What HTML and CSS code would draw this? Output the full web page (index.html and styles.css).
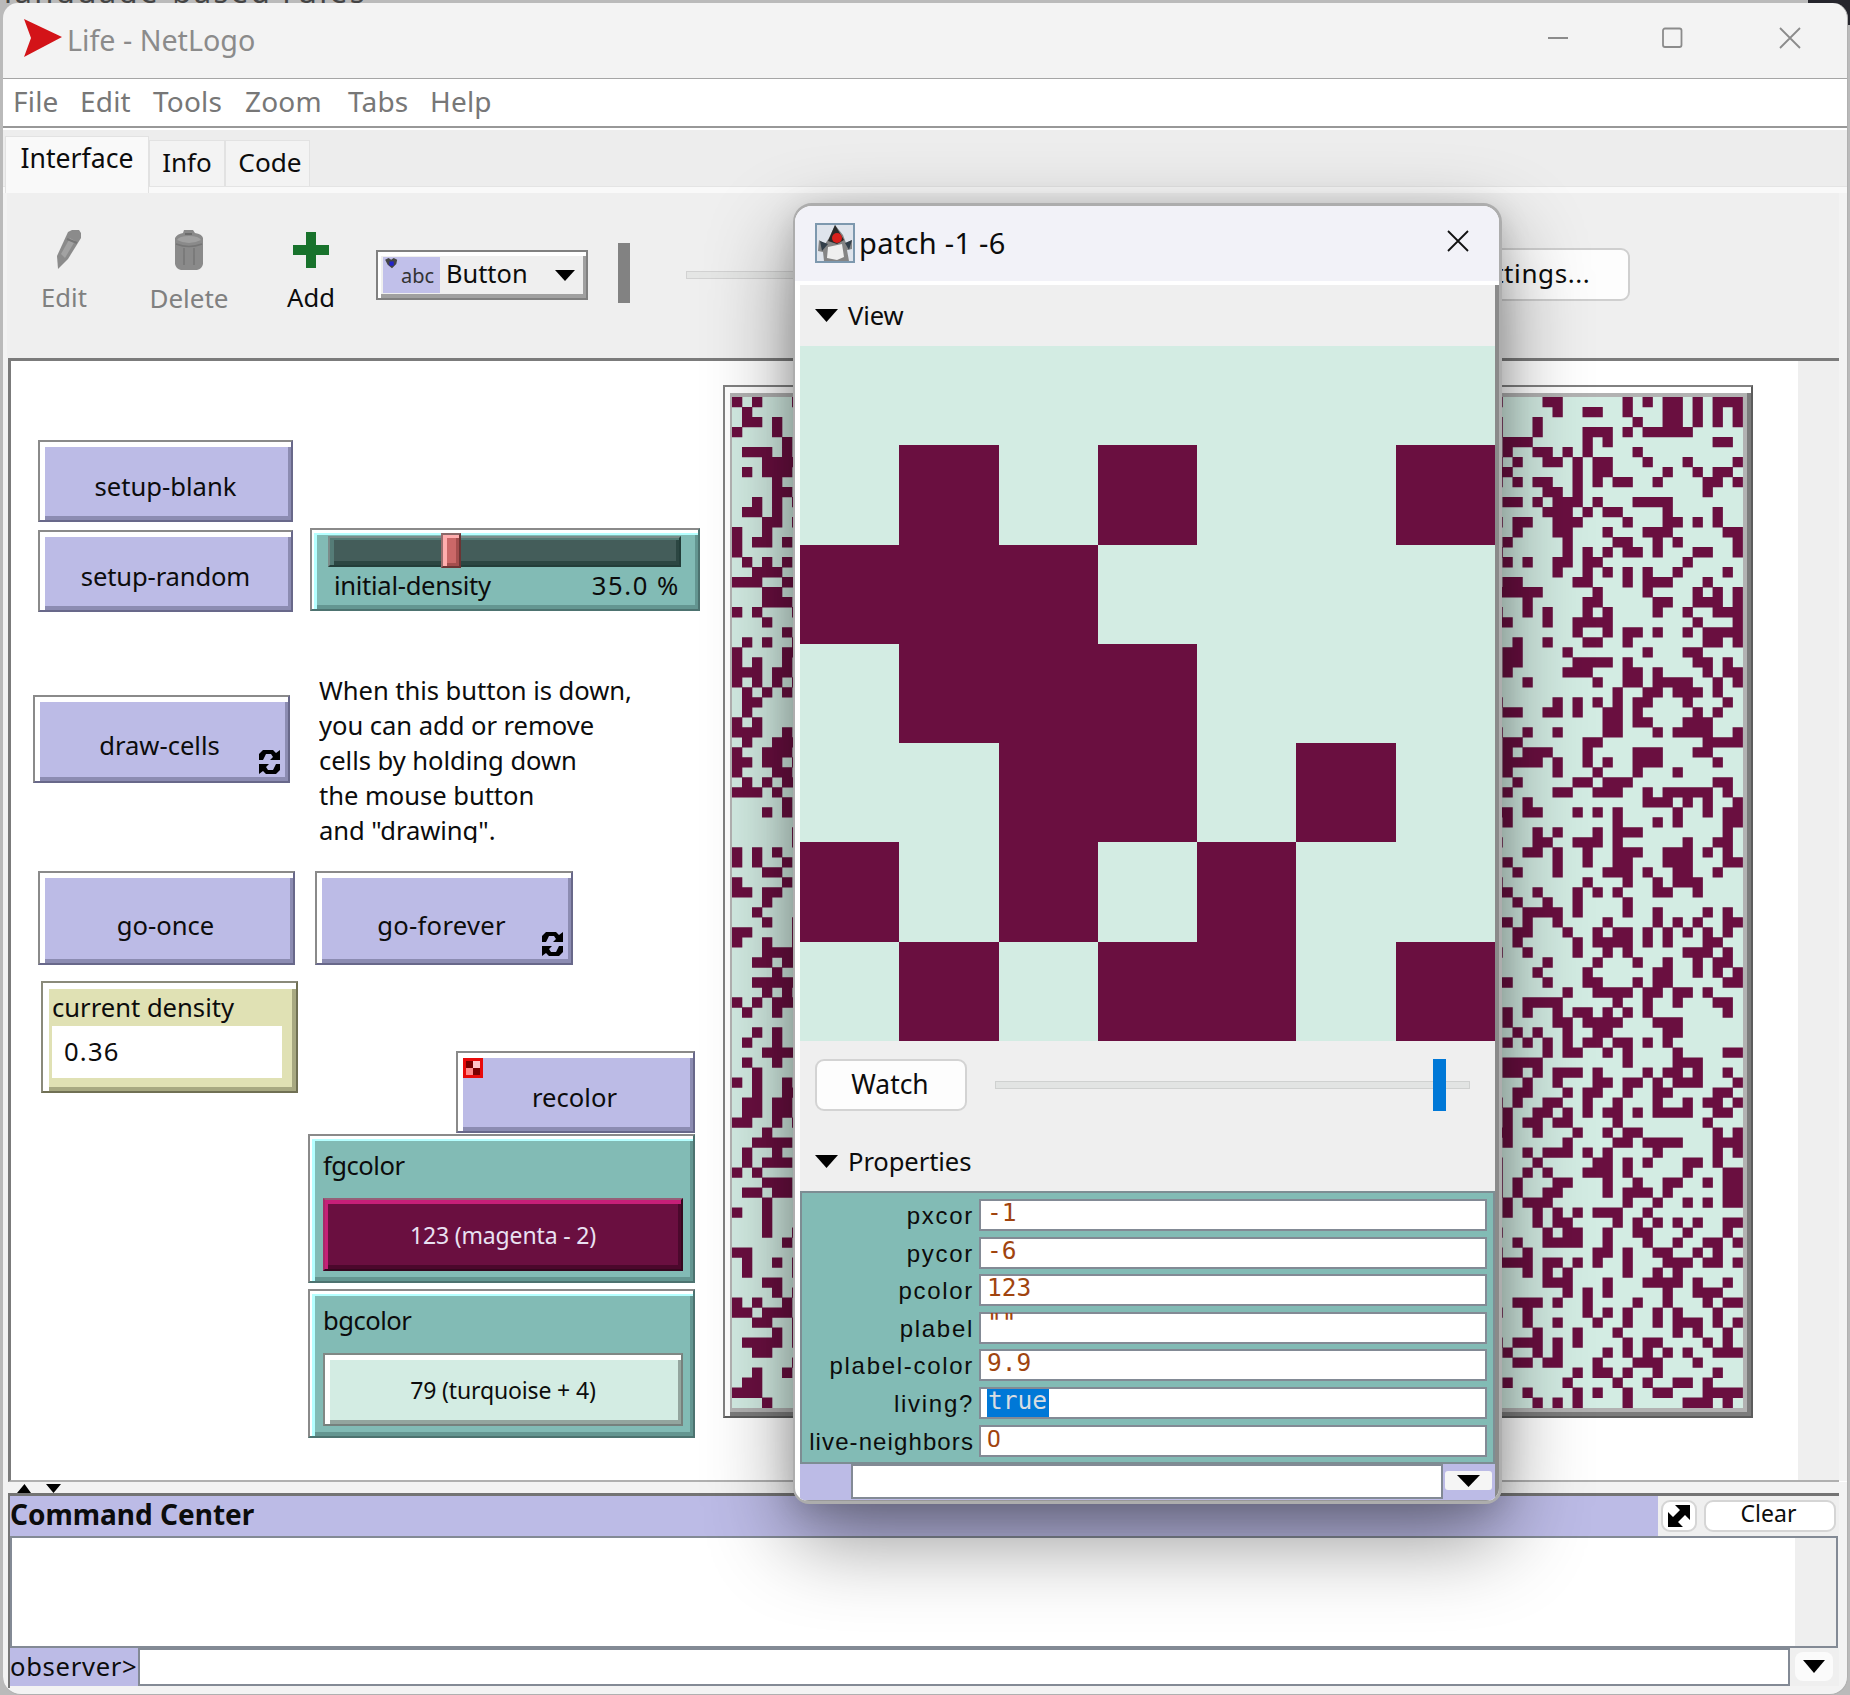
FILE: index.html
```html
<!DOCTYPE html>
<html lang="en">
<head>
<meta charset="utf-8">
<title>Life - NetLogo</title>
<link rel="stylesheet" href="styles.css">
</head>
<body>
<div class="backdrop-text">language-based rules</div>
<div class="backdrop-dark"></div>
<main class="window">
  <header class="titlebar">
    <svg class="app-icon" width="38" height="38" viewBox="0 0 38 38"><path d="M0 0 L38 18 L0 38 L7 19 Z" fill="#d31318"/></svg>
    <span class="title">Life - NetLogo</span>
    <svg class="caption" width="254" height="22" viewBox="0 0 254 22" fill="none" stroke="#8b8b8b" stroke-width="1.8"><path d="M1 11H21M233 1L253 21M253 1L233 21"/><rect x="116" y="1.5" width="18.5" height="18.5" rx="2"/></svg>
  </header>
  <nav class="menu"><span>File</span><span>Edit</span><span>Tools</span><span>Zoom</span><span>Tabs</span><span>Help</span></nav>
  <div class="tabs"><span class="tab active">Interface</span><span class="tab info">Info</span><span class="tab code">Code</span></div>
  <section class="toolbar">
    <div class="tool edit off">
      <svg width="26" height="40" viewBox="0 0 26 40"><path d="M12 2L16 0H23L25 3V8L12 29L2 39L1 26Z" fill="#8b8b8b"/><path d="M5 24L14 8L19 11L9 28Z" fill="#a2a2a2"/><path d="M11 9L21 13" stroke="#777" stroke-width="2"/></svg>
      <span>Edit</span>
    </div>
    <div class="tool delete off">
      <svg width="28" height="40" viewBox="0 0 28 40"><path d="M0 8Q2 4 8 3L9 0H18L20 3Q27 4 28 8V34Q27 39 22 40H6Q1 39 0 34Z" fill="#8a8a8a"/><path d="M2 10Q4 6 14 6T26 10Q20 13 14 13T2 10Z" fill="#a0a0a0"/><path d="M1 14Q14 19 27 14M9 18V35M19 18V35" fill="none" stroke="#767676" stroke-width="1.500"/><path d="M10 4H17" stroke="#6c6c6c" stroke-width="2"/></svg>
      <span>Delete</span>
    </div>
    <div class="tool add">
      <svg width="36" height="36" viewBox="0 0 36 36"><path d="M13 0H23V13H36V23H23V36H13V23H0V13H13Z" fill="#18722c"/></svg>
      <span>Add</span>
    </div>
    <div class="combo">
      <span class="combo-icon"><svg width="14" height="12" viewBox="0 0 16 14"><path d="M0 2L4 0 7 2 10 0 14 2 13 7 8 12 3 8Z" fill="#444"/><rect x="5" y="4" width="5" height="5" fill="#22c"/></svg>abc</span>
      <span class="combo-text">Button</span>
      <svg width="20" height="11" viewBox="0 0 20 11"><path d="M0 0H20L10 11Z"/></svg>
    </div>
    <div class="speed-mark"></div>
    <div class="speed-track"></div>
    <div class="settings">Settings...</div>
  </section>
  <section class="canvas">
    <div class="button w-blank">setup-blank</div>
    <div class="button w-random">setup-random</div>
    <div class="panel w-slider">
      <div class="groove"><i></i></div>
      <div class="slider-label"><span>initial-density</span><span class="value">35.0 %</span></div>
    </div>
    <div class="button w-draw">draw-cells<svg class="loop" width="21" height="24" viewBox="0 0 21 24"><path d="M0 10V4L4 0H14L17 3L21 0V10H11L14 7L12 4H7L4 10ZM21 14V20L17 24H7L4 21L0 24V14H10L7 17L9 20H14L17 14Z"/></svg></div>
    <div class="note">When this button is down,<br>you can add or remove<br>cells by holding down<br>the mouse button<br>and "drawing".</div>
    <div class="button w-once">go-once</div>
    <div class="button w-forever">go-forever<svg class="loop" width="21" height="24" viewBox="0 0 21 24"><path d="M0 10V4L4 0H14L17 3L21 0V10H11L14 7L12 4H7L4 10ZM21 14V20L17 24H7L4 21L0 24V14H10L7 17L9 20H14L17 14Z"/></svg></div>
    <div class="monitor"><span>current density</span><output>0.36</output></div>
    <div class="button w-recolor"><svg class="patch-icon" width="20" height="20" viewBox="0 0 20 20"><path fill="#e80a0a" d="M0 0H20V20H0Z"/><path fill="#7a0000" d="M3 3H10V10H3ZM10 10H17V17H10Z"/><path fill="#ffc4c8" d="M10 3H17V10H10Z"/><path fill="#ff8a8a" d="M3 10H10V17H3Z"/></svg>recolor</div>
    <div class="panel input w-fg"><span>fgcolor</span><div class="swatch magenta">123 (magenta - 2)</div></div>
    <div class="panel input w-bg"><span>bgcolor</span><div class="swatch turquoise">79 (turquoise + 4)</div></div>
    <div class="world"><svg id="world" viewBox="0 0 101 101" preserveAspectRatio="none"><path fill="#6a0f40"/></svg></div>
  </section>
  <div class="splitter"><svg width="46" height="9" viewBox="0 0 46 9"><path d="M7.500 0L14 9H0ZM29 0H44L36.500 9Z"/></svg></div>
  <section class="command">
    <div class="command-head">
      <h2>Command Center</h2>
      <span class="expand"><svg width="24" height="24" viewBox="0 0 24 24"><path d="M8 1H23V16L18 11L11 18L16 23H1V8L6 13L13 6Z"/></svg></span>
      <span class="clear">Clear</span>
    </div>
    <div class="output"></div>
    <div class="prompt"><label>observer&gt;</label><div class="field"></div><span class="history"><svg width="22" height="13" viewBox="0 0 22 13"><path d="M0 0H22L11 13Z"/></svg></span></div>
  </section>
</main>
<aside class="dialog">
  <header class="dialog-title">
    <svg width="40" height="40" viewBox="0 0 40 40"><rect x="1" y="1" width="38" height="38" fill="#dfe4ec" stroke="#7d98ae" stroke-width="2"/><path d="M20 2L28 12L31 20L37 17V26L32 27L34 38H9L8 29L3 28L4 17L10 21L14 15Z" fill="#858585"/><path d="M20 2L29 17L22 21L13 18Z" fill="#2a2a2a"/><path d="M13 24L27 21L29 34L22 37L12 35Z" fill="#efefef"/><circle cx="22" cy="15" r="5" fill="#d8201c"/><path d="M5 18L13 21L7 28ZM30 20L37 17L34 27Z" fill="#333f4a"/></svg>
    <span>patch -1 -6</span>
    <svg class="x" width="22" height="22" viewBox="0 0 22 22" fill="none" stroke="#111" stroke-width="1.8"><path d="M1 1L21 21M21 1L1 21"/></svg>
  </header>
  <div class="dialog-body">
    <div class="fold view"><svg width="23" height="13" viewBox="0 0 23 13"><path d="M0 0H23L11.500 13Z"/></svg>View</div>
    <svg class="zoomed" viewBox="0 0 7 7" preserveAspectRatio="none" shape-rendering="crispEdges"><rect width="7" height="7" fill="#d3ece3"/><path fill="#6a0f40" d="M1 1h1v1h-1zM3 1h1v1h-1zM6 1h1v1h-1zM0 2h3v1h-3zM1 3h3v1h-3zM2 4h2v1h-2zM5 4h1v1h-1zM0 5h1v1h-1zM2 5h1v1h-1zM4 5h1v1h-1zM1 6h1v1h-1zM3 6h2v1h-2zM6 6h1v1h-1z"/></svg>
    <div class="watch-row"><span class="watch">Watch</span><div class="track"><i></i></div></div>
    <div class="fold props"><svg width="23" height="13" viewBox="0 0 23 13"><path d="M0 0H23L11.500 13Z"/></svg>Properties</div>
    <div class="properties">
      <label>pxcor</label><div>-1</div>
      <label>pycor</label><div>-6</div>
      <label>pcolor</label><div>123</div>
      <label>plabel</label><div class="quotes">""</div>
      <label>plabel-color</label><div>9.9</div>
      <label>living?</label><div><mark>true</mark></div>
      <label class="long">live-neighbors</label><div class="zero">0</div>
    </div>
    <div class="ask"><div class="field"></div><span><svg width="23" height="12" viewBox="0 0 23 12"><path d="M0 0H23L11.500 12Z"/></svg></span></div>
  </div>
</aside>
<script src="world.js"></script>
</body>
</html>
```
FILE: styles.css
```css
* { box-sizing: border-box; }
body { margin: 0; width: 1850px; height: 1695px; overflow: hidden; position: relative; background: #bababa; font-family: "Noto Sans", sans-serif; font-size: 25.6px; color: #0c0c0c; }
svg { display: block; flex: none; }
.backdrop-text { position: absolute; left: 4px; top: -27px; font-size: 31px; line-height: 36px; letter-spacing: 2.400px; color: #444; white-space: nowrap; }
.backdrop-dark { position: absolute; right: 0; top: 0; width: 42px; height: 25px; background: #25252c; }
.window { position: absolute; left: 3px; top: 3px; width: 1845px; height: 1692px; border-radius: 15px 15px 18px 18px; background: #f3f3f3; overflow: hidden; border: solid #b0b0b0; border-width: 0 1px 1px 0; display: flex; flex-direction: column; }
.titlebar { height: 76px; flex: none; border-bottom: 1px solid #a5a5a5; display: flex; align-items: flex-start; padding: 16px 46px 0 21px; color: #8b8b8b; }
.title { font-size: 28.7px; line-height: 40px; margin: 1px 0 0 5px; flex: 1; }
.caption { margin-top: 8px; }
.menu { height: 47px; flex: none; background: #fff; display: flex; font-size: 28px; line-height: 45px; color: #777; padding-left: 10px; letter-spacing: .2px; }
.menu span:nth-child(1) { width: 67px; }
.menu span:nth-child(2) { width: 73px; }
.menu span:nth-child(3) { width: 92px; }
.menu span:nth-child(4) { width: 103px; }
.menu span:nth-child(5) { width: 82px; }
.tabs { height: 67px; flex: none; border-top: 2px solid #989898; box-shadow: inset 0 2px #fff; background: linear-gradient(#ededed 58px, #e4e4e4 58px 59px, #f9f9f9 59px); display: flex; align-items: flex-start; padding: 8px 0 0 2px; }
.tab { background: #f3f3f3; border: 1px solid #e2e2e2; border-bottom: 0; height: 46px; margin-top: 4px; line-height: 43px; text-align: center; }
.tab.active { background: #f9f9f9; width: 144px; height: 57px; margin-top: 0; line-height: 43px; font-size: 26.6px; }
.tab.info { width: 76px; font-size: 26px; }
.tab.code { width: 85px; padding-left: 5px; font-size: 26.2px; }
.toolbar { height: 165px; flex: none; background: #efefef; margin: 0 8px 0 4px; display: flex; align-items: flex-start; position: relative; }
.tool { display: flex; flex-direction: column; align-items: center; padding-top: 37px; height: 123px; }
.tool span { margin-top: auto; line-height: 36px; }
.tool svg { margin-left: 10px; }
.off { color: #808080; }
.edit { width: 48px; margin-left: 33px; }
.delete { width: 80px; margin-left: 61px; font-size: 26px; }
.delete svg { margin-left: -1px; }
.add { width: 48px; margin-left: 58px; padding-top: 39px; }
.add svg { margin-left: 0; }
.combo { margin: 57px 0 0 41px; width: 212px; height: 50px; border: 2px solid #808080; box-shadow: inset 3px 4px #fff, inset -3px -4px #a0a0a0; display: flex; align-items: center; padding-left: 5px; }
.combo-icon { width: 57px; height: 36px; background: #c1c0ea; position: relative; font-size: 20px; line-height: 37px; padding-left: 18px; color: #333; }
.combo-icon svg { position: absolute; left: 2px; top: 1px; }
.combo-text { width: 115px; padding-left: 6px; line-height: 44px; margin-top: -4px; font-size: 25.4px; }
.speed-mark { margin: 50px 0 0 30px; width: 12px; height: 60px; background: #828282; }
.speed-track { margin: 78px 0 0 56px; width: 600px; height: 8px; border: 1px solid #d2d2d2; background: #e5e6e5; }
.settings { margin: 55px 0 0 151px; width: 193px; height: 53px; border: 2px solid #cfcfcf; border-radius: 9px; background: #fdfdfd; line-height: 46px; padding-left: 25px; font-size: 26px; letter-spacing: .6px; }
.canvas { height: 1124px; flex: none; background: #fff; margin: 0 8px 0 5px; border: solid #7b7b7b; border-width: 3px 0 2px 3px; border-bottom-color: #b0b0b0; position: relative; box-shadow: inset -41px 0 #efefef; }
.button, .panel, .monitor { position: absolute; border: 2px solid; border-color: #8a8a8a #68688a #68688a #8a8a8a; }
.button { background: #bcbbe6; box-shadow: inset 5px 5px #fff, inset -3px -4px #8c8cb2; display: flex; align-items: center; justify-content: center; padding-top: 11px; }
.panel { background: #82bbb5; border-color: #8a8a8a #4d7370 #4d7370 #8a8a8a; box-shadow: inset 2px 3px #fff, inset 5px 5px #b5ffff, inset -3px -4px #649691; }
.w-blank { left: 27px; top: 79px; width: 255px; height: 82px; }
.w-random { left: 27px; top: 169px; width: 255px; height: 82px; letter-spacing: -.15px; }
.w-draw { left: 22px; top: 334px; width: 257px; height: 88px; padding: 12px 4px 0 0; }
.w-once { left: 27px; top: 510px; width: 257px; height: 94px; padding: 15px 2px 0 0; }
.w-forever { left: 304px; top: 510px; width: 258px; height: 94px; padding: 15px 5px 0 0; letter-spacing: .3px; }
.w-recolor { left: 445px; top: 690px; width: 239px; height: 82px; padding-right: 2px; }
.loop { position: absolute; right: 8px; bottom: 7px; }
.patch-icon { position: absolute; left: 5px; top: 5px; }
.w-slider { left: 299px; top: 167px; width: 390px; height: 83px; padding: 6px 18px 0 16px; }
.groove { height: 31px; width: 353px; background: #445d5a; border: 2px solid; border-color: #7b8c8a #233d39 #233d39 #7b8c8a; box-shadow: inset 4px 2px #557c77, inset -3px -4px #2c4642; position: relative; }
.groove i { position: absolute; left: 111px; top: -5px; width: 20px; height: 35px; background: #cb6868; border: 2px solid; border-color: #8a6868 #6c3434 #6c3434 #9a6c6c; box-shadow: inset 4px 3px #ffaeae, inset -3px -3px #a44e4e; }
.slider-label { display: flex; justify-content: space-between; line-height: 36px; margin: 1px 2px 0 6px; letter-spacing: -.3px; }
.slider-label .value { letter-spacing: 1.600px; margin-right: -2px; }
.note { position: absolute; left: 308px; top: 312px; width: 330px; height: 170px; line-height: 35px; overflow: hidden; white-space: nowrap; letter-spacing: -.05px; }
.monitor { left: 30px; top: 620px; width: 257px; height: 112px; background: #e0e1b4; border-color: #8a8a7a #707054 #707054 #8a8a7a; box-shadow: inset 6px 6px #fff, inset -4px -4px #a8a982; padding: 7px 14px 0 9px; display: flex; flex-direction: column; }
.monitor span { line-height: 36px; }
.monitor output { background: #fff; height: 52px; line-height: 52px; padding-left: 12px; letter-spacing: 1.200px; }
.input { left: 297px; width: 387px; height: 149px; padding: 12px 10px 0 13px; }
.input span { display: block; line-height: 36px; letter-spacing: -.5px; }
.w-fg { top: 773px; }
.w-bg { top: 928px; }
.swatch { height: 73px; margin-top: 14px; font-size: 23px; line-height: 71px; letter-spacing: -.15px; text-align: center; border: 2px solid; }
.magenta { background: #6a0f40; color: #e9e1f2; border-color: #956078 #35071f #35071f #a52a68; box-shadow: inset 3px 4px #c61f78, inset -3px -4px #4b082c; }
.turquoise { background: #d3ece3; border-color: #808885 #76817d #76817d #808885; box-shadow: inset 5px 5px #fff, inset -3px -4px #93a59e; }
.world { position: absolute; left: 712px; top: 24px; width: 1030px; height: 1033px; border: 2px solid; border-color: #818181 #5c5c5c #5c5c5c #818181; box-shadow: inset 5px 6px #fff, inset -4px -4px #7c7c7c, inset 0 0 0 12px #b2b2b2; padding: 10px 0 0 7px; }
.world svg { width: 1010.600px; height: 1010.600px; background: #d3ece3; }
.splitter { height: 11px; flex: none; margin-left: 14px; padding-top: 2px; box-shadow: 0 -1px #fff; }
.command { margin: 0 8px 0 5px; flex: none; border-top: 3px solid #747474; border-left: 2px solid #777; height: 195px; }
.command-head { height: 40px; display: flex; align-items: center; background: #efefef; }
.command-head h2 { margin: 0; width: 1648px; height: 40px; background: #bcbbe6; font-size: 28px; line-height: 37px; }
.expand, .clear { border: 2px solid #d5d5d5; border-radius: 9px; background: #fff; height: 32px; }
.expand { margin-left: 3px; width: 36px; padding: 2px 0 0 4px; }
.clear { margin-left: 7px; width: 132px; text-align: center; line-height: 22px; font-size: 23px; padding-right: 3px; }
.output { height: 112px; border: 2px solid #838a95; background: #fff; box-shadow: inset -41px 0 #efefef; margin-right: 1px; }
.prompt { display: flex; height: 38px; background: #efefef; }
.prompt label { width: 128px; background: #bcbbe6; line-height: 37px; letter-spacing: .7px; white-space: nowrap; }
.field { border: 2px solid #838a95; background: #fff; }
.prompt .field { width: 1652px; }
.history { margin: 4px 0 0 5px; width: 38px; height: 29px; border-radius: 8px; background: #fbfbfb; padding: 8px 0 0 8px; }

.dialog { position: absolute; left: 793px; top: 203px; width: 709px; height: 1301px; border: 3px solid #adadad; border-left-width: 2px; border-radius: 19px 19px 16px 16px; background: #fff; box-shadow: 0 34px 85px rgba(0,0,0,.44), 0 6px 30px rgba(0,0,0,.14); overflow: hidden; }
.dialog-title { height: 75px; background: #f2f2f8; display: flex; align-items: center; padding: 0 30px 2px 20px; font-size: 29px; }
.dialog-title span { flex: 1; margin-left: 4px; letter-spacing: .3px; }
.dialog-title .x { margin-bottom: 4px; }
.dialog-body { margin: 4px 0 0 5px; height: 1217px; border-right: 4px solid #8a8a8a; border-bottom: 2px solid #999; background: #efefef; }
.fold { display: flex; align-items: center; gap: 10px; padding-left: 15px; letter-spacing: -.1px; }
.view { height: 61px; }
.zoomed { width: 695px; height: 695px; }
.watch-row { display: flex; align-items: center; padding-left: 15px; height: 88px; }
.watch { width: 152px; height: 52px; border: 2px solid #d3d3d3; border-radius: 9px; background: #fdfdfd; font-size: 26.4px; line-height: 46px; text-align: center; padding-right: 2px; }
.track { margin-left: 28px; width: 475px; height: 8px; border: 1px solid #cfd1d0; background: #e2e4e3; position: relative; }
.track i { position: absolute; left: 437px; top: -23px; width: 13px; height: 52px; background: #0078d7; }
.props { height: 62px; padding-top: 3px; }
.properties { height: 273px; background: #82bbb5; border: 2px solid #7d8d93; display: grid; grid-template-columns: 172px 508px; grid-auto-rows: 32px; row-gap: 5.600px; column-gap: 5px; padding-top: 6px; font-size: 24px; }
.properties label { text-align: right; font-family: "Liberation Sans", sans-serif; letter-spacing: 1.700px; line-height: 33px; white-space: nowrap; }
.properties label.long { letter-spacing: 1.100px; }
.properties div { background: #fff; border: 2px solid #838a95; color: #a0440f; font-family: "DejaVu Sans Mono", monospace; font-size: 24.5px; line-height: 24px; padding-left: 6px; }
.properties div.zero { font-family: Roboto, sans-serif; }
.properties div.quotes { line-height: 18px; }
.properties mark { display: inline-block; background: #0078d7; color: #d8dde2; height: 28px; line-height: 24px; width: 62px; padding-left: 1px; }
.ask { background: #bcbbe6; display: flex; height: 36px; padding-left: 51px; }
.ask .field { width: 592px; height: 35px; }
.ask span { margin: 7px 0 0 2px; width: 47px; height: 19px; background: #f5f5f5; border-radius: 3px; padding: 4px 0 0 12px; }
```
FILE: world.js
```js
// Live patches per row: digits are columns 0-6, letters are columns 76-100.
const rows = `026|afgnprsuwxy
1|gjknrsuwy
124|aeorsuwy
04|aejklnpqrst
5|bcdjlwx
1235|befhjo
3456|acfgiklpty
1345|abiklruwx
4|acefikmnqvwy
45|fgiv
246|bceghikopqr
124|fghjlmrw
346|acdghinrsuw
03|cghlpqrxy
0235|bhmnqsy
0|ahjlnoquvy
135|bdghjkt
234|gjlnpsx
01256|bcijnpqrv
34|abcdekpuwy
345|djkqruvwy
026|adfjlqtwxy
3|abfijkluy
5|ilnoqtvwxy
136|cfjknvwy
056|bchptu
025|bcijklnuvx
01245|bhijnoqvxy
0246|dknoqrstwy
135|mpqstuw
12|agikmoptx
1|bcfgilmouw
02|lmoptuv
0125|adglmqstuvy
1456|bcjkvwxy
0345|bdefjopquv
01346|bcdegjlopqw
045|bgkos
1356|cijlmnwx
0124|bghklmprstuvx
5|dpqrtvy
35|abdeikmsvxy
|bmqsxy
6|egkmnox
6|aefijkmtwx
024|degjmnorstvx
025|bgjmnrstxy
34|cglmnpstw
05|ajnqstu
0134|abeikmqru
3|cfin
2|defginqvx
36|abdglqsuxy
016|cdhkmnprtvx
036|ciklmnprvw
3456|adilntuvx
2356|fkoruwx
4|ejqruwy
23456|abfjkoqrxy
35|hklmnpqstv
02456|defgmpswx
14|bdgijlnpx
|bghjklmqrs
24|cehklrs
14|bdfhjkmnpr
3456|fhilnsxy
14|bcdenstu
2|bceghikprsux
025|dgklnoqstuy
256|cdhjknqrwx
1245|acfgjmqtvwy
1245|befhjlmoqrstwx
0146|bdeghmv
3|abeilnowy
2345|bhmnpqrswxy
14|dfghjlqwy
1345|aeklnptuw
02|adfjklntxy
345|acghlorsvxy
1245|acfglnoprxy
3|bdefnqtvxy
03|begiklmp
3|eghmoqsuxy
36|afhiloptx
5|cfghilpsvwy
01|adklnqruw
146|abcdfgiknrstvwy
16|dfhnqs
34|fghlpqrsux
46|hjlruvw
025|cdegjorvxy
01345|adjlnqsw
236|dgknqstuwy
46|eimsux
12346|acdeginpqvx
23|beglnprtwxy
6|cdfgkopqu
25|iklnqw
12|bhmpstv
012|diknqrvwxy
3|egintuvx`.split("\n");

const d = rows.map((row, y) => [...row].map(ch => {
  if (ch === "|") return "";
  const x = ch >= "a" ? 76 + ch.charCodeAt(0) - 97 : Number(ch);
  return `M${x} ${y}h1.03v1.03h-1.03z`;
}).join("")).join("");
document.querySelector("#world path").setAttribute("d", d);
```
